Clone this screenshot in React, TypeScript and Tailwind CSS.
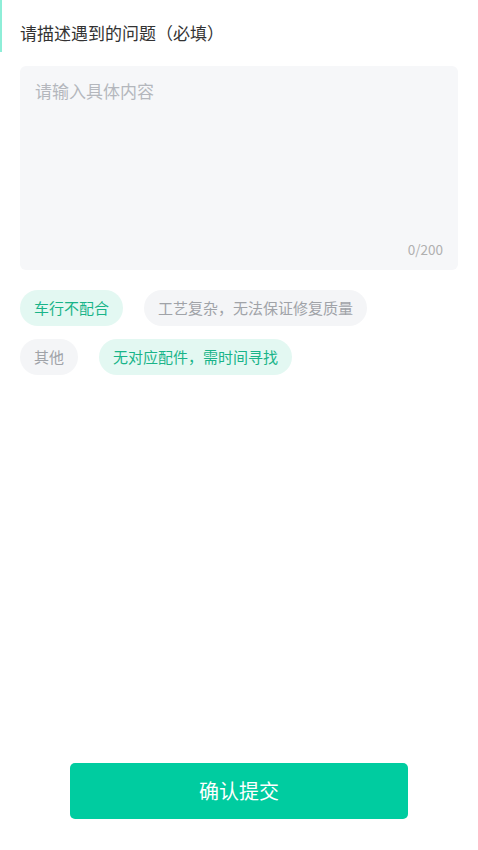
import React from "react";

const tagRows = [
  [
    { label: "车行不配合", active: true },
    { label: "工艺复杂，无法保证修复质量", active: false },
  ],
  [
    { label: "其他", active: false },
    { label: "无对应配件，需时间寻找", active: true },
  ],
];

export default function App() {
  return (
    <div
      className="relative flex h-[850px] w-[478px] flex-col bg-white"
      style={{ fontFamily: '"Noto Sans CJK SC", "Noto Sans", sans-serif' }}
    >
      {/* accent line at top-left */}
      <div className="absolute left-0 top-0 h-[52px] w-[2px] bg-[#8eeed8]" />

      <div className="px-5 pt-[19px]">
        <h2 className="text-[17px] leading-[28px] text-[#333]">请描述遇到的问题（必填）</h2>

        <div className="mt-[19px] flex h-[204px] flex-col justify-between rounded-md bg-[#f6f7f9] px-[15px] pt-[11px] pb-[12px]">
          <div className="text-[17px] leading-[28px] text-[#b4b7bd]">请输入具体内容</div>
          <div className="text-right text-[13.5px] leading-[18px] text-[#b0b0b0]">0/200</div>
        </div>

        <div className="mt-[20px] flex flex-col gap-[13px]">
          {tagRows.map((row, i) => (
            <div key={i} className="flex gap-[21px]">
              {row.map((t) => (
                <span
                  key={t.label}
                  className={
                    t.active
                      ? "flex h-[36px] items-center rounded-full bg-[#e3f8f2] px-[14px] text-[15px] text-[#19b489]"
                      : "flex h-[36px] items-center rounded-full bg-[#f4f5f7] px-[14px] text-[15px] text-[#a0a3a8]"
                  }
                >
                  {t.label}
                </span>
              ))}
            </div>
          ))}
        </div>
      </div>

      <div className="mt-auto flex justify-center pb-[31px]">
        <button className="flex h-[56px] w-[338px] items-center justify-center rounded-[5px] bg-[#00cca0] text-[20px] text-white">
          确认提交
        </button>
      </div>
    </div>
  );
}
